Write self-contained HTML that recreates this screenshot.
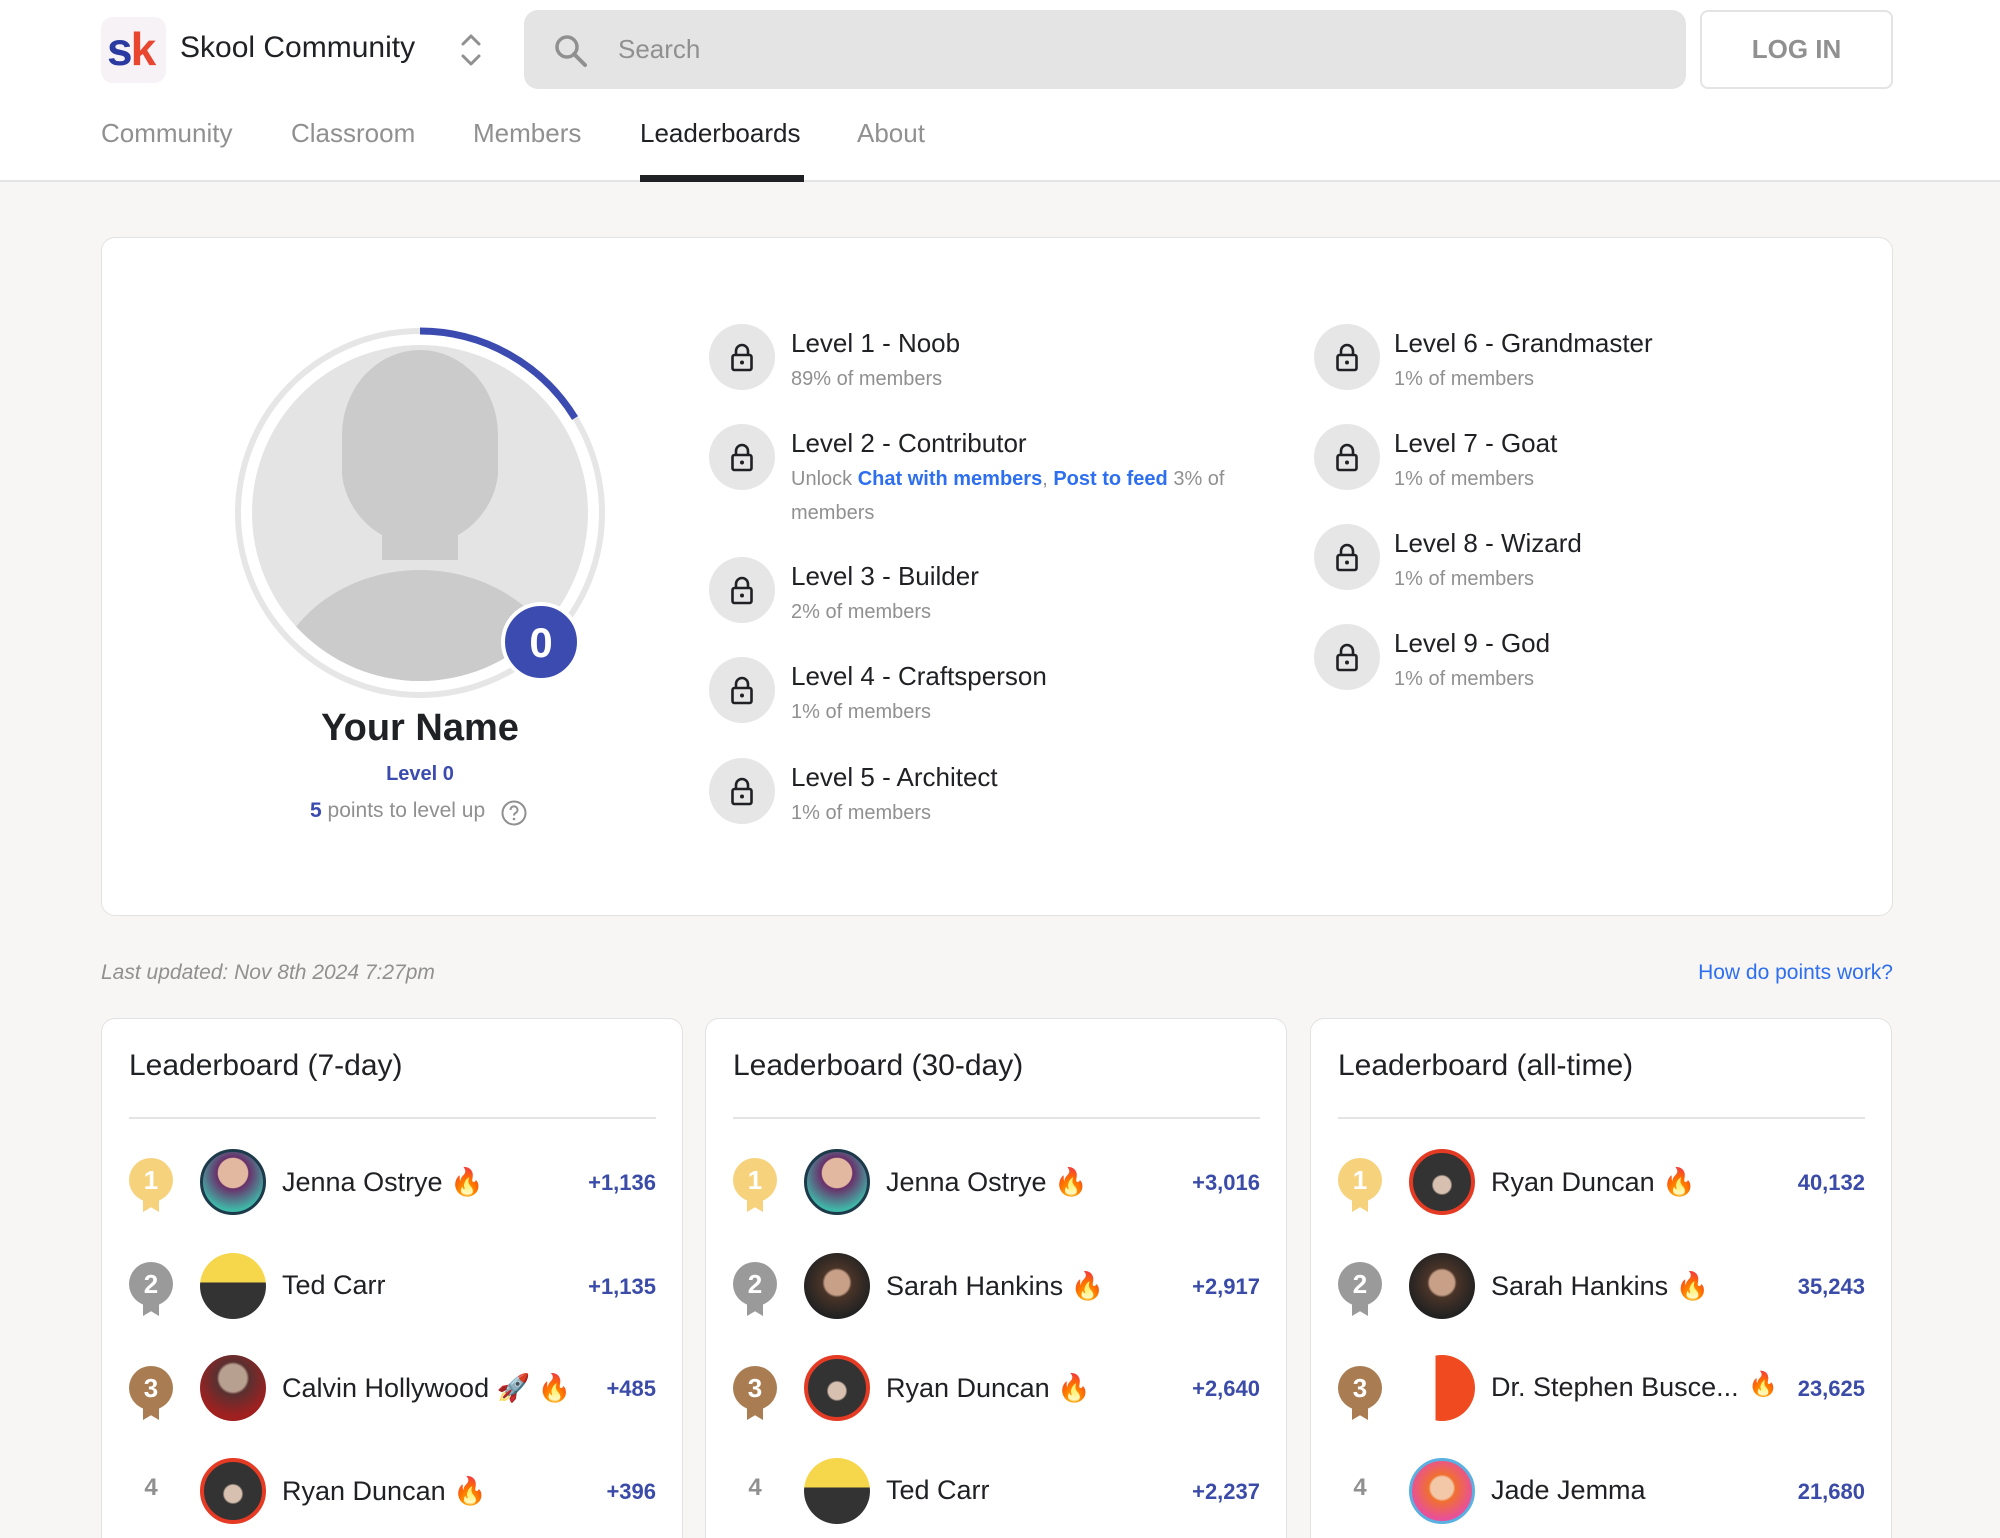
<!DOCTYPE html>
<html><head><meta charset="utf-8"><style>
*{box-sizing:border-box;margin:0;padding:0}
html,body{width:2000px;height:1538px;overflow:hidden}
body{background:#f7f6f4;font-family:"Liberation Sans",Roboto,sans-serif;color:#202124}
#w{position:relative;width:2000px;height:1538px;overflow:hidden}
.a{position:absolute;white-space:nowrap}
.hdr{position:absolute;left:0;top:0;width:2000px;height:182px;background:#fff;border-bottom:2px solid #e4e4e4}
.nav{top:118px;font-size:26px;color:#909090}
.card{position:absolute;background:#fff;border:1.5px solid #e2e2e2;border-radius:14px}
.lock{position:absolute;width:66px;height:66px;border-radius:50%;background:#e6e6e6}
.lock svg{position:absolute;left:21px;top:18px}
.lt{font-size:26px;color:#202124}
.ls{font-size:20px;color:#909090}
.med{position:absolute;width:44px;height:44px;border-radius:50%;color:#fff;font-size:26px;font-weight:bold;text-align:center;line-height:44px}
.med:after{content:"";position:absolute;left:14px;top:38px;width:16px;height:16px;background:inherit;clip-path:polygon(0 0,100% 0,100% 100%,50% 70%,0 100%)}
.av{position:absolute;width:66px;height:66px;border-radius:50%}
.nm{font-size:27px;color:#202124}
.pt{font-size:22px;color:#3a4ba8;font-weight:bold;text-align:right}
.lbt{font-size:30px;color:#202124}
</style></head><body><div id="w">
<div class="hdr"></div>
<div class="a" style="left:101px;top:17px;width:65px;height:66px;border-radius:12px;background:#f6f2f6"></div>
<div class="a" style="left:107px;top:22px;font-size:46px;font-weight:bold;letter-spacing:-2px"><span style="color:#2b3aa0">s</span><span style="color:#e8462f">k</span></div>
<div class="a" style="left:180px;top:31px;font-size:30px;color:#202124">Skool Community</div>
<svg class="a" style="left:458px;top:32px" width="26" height="36" viewBox="0 0 26 36"><path d="M5 12 L13 4 L21 12 M5 24 L13 32 L21 24" fill="none" stroke="#909090" stroke-width="3" stroke-linecap="round" stroke-linejoin="round"/></svg>
<div class="a" style="left:524px;top:10px;width:1162px;height:79px;border-radius:14px;background:#e4e4e4"></div>
<svg class="a" style="left:553px;top:33px" width="36" height="36" viewBox="0 0 36 36"><circle cx="14" cy="14" r="10" fill="none" stroke="#909090" stroke-width="3.5"/><path d="M21 21 L32 32" stroke="#909090" stroke-width="4" stroke-linecap="round"/></svg>
<div class="a" style="left:618px;top:34px;font-size:26px;color:#909090">Search</div>
<div class="a" style="left:1700px;top:10px;width:193px;height:79px;border:2px solid #e4e4e4;border-radius:8px;font-size:26px;font-weight:bold;color:#909090;text-align:center;line-height:75px">LOG IN</div>
<div class="a nav" style="left:101px">Community</div>
<div class="a nav" style="left:291px">Classroom</div>
<div class="a nav" style="left:473px">Members</div>
<div class="a nav" style="left:640px;color:#202124">Leaderboards</div>
<div class="a nav" style="left:857px">About</div>
<div class="a" style="left:640px;top:175px;width:164px;height:7px;background:#202124"></div>

<div class="card" style="left:101px;top:237px;width:1792px;height:679px"></div>
<svg class="a" style="left:232px;top:325px" width="376" height="376" viewBox="0 0 376 376">
<circle cx="188" cy="188" r="182" fill="none" stroke="#e6e6e6" stroke-width="6"/>
<path d="M188 6 A182 182 0 0 1 343 93" fill="none" stroke="#3b4bb0" stroke-width="7"/>
<circle cx="188" cy="188" r="168" fill="#e4e4e4"/>
<clipPath id="c"><circle cx="188" cy="188" r="168"/></clipPath>
<g clip-path="url(#c)" fill="#cbcbcb"><path d="M110 110 a78 85 0 0 1 156 0 v40 a78 80 0 0 1 -40 60 v25 h-76 v-25 a78 80 0 0 1 -40 -60 z"/><ellipse cx="188" cy="375" rx="150" ry="130"/></g>
<circle cx="309" cy="317" r="38" fill="#3b4bb0" stroke="#fff" stroke-width="4"/>
<text x="309" y="332" font-size="42" font-weight="bold" fill="#fff" text-anchor="middle" font-family="Liberation Sans">0</text>
</svg>
<div class="a" style="left:220px;width:400px;text-align:center;top:707px;font-size:38px;font-weight:bold">Your Name</div>
<div class="a" style="left:220px;width:400px;text-align:center;top:763px;font-size:20px;font-weight:bold;color:#3b4bb0">Level 0</div>
<div class="a" style="left:310px;top:799px;font-size:21px;color:#909090"><b style="color:#3b4bb0">5</b> points to level up</div>
<svg class="a" style="left:500px;top:799px" width="28" height="28" viewBox="0 0 28 28"><circle cx="14" cy="14" r="11.5" fill="none" stroke="#909090" stroke-width="2"/><path d="M10.5 11 a3.5 3.5 0 1 1 5 3 c-1.2 .6 -1.5 1.2 -1.5 2.5" fill="none" stroke="#909090" stroke-width="2"/><circle cx="14" cy="20" r="1.3" fill="#909090"/></svg>

<div class="lock" style="left:709px;top:324px"><svg width="24" height="30" viewBox="0 0 24 30"><path d="M6 13 V9 a6 6 0 0 1 12 0 V13" fill="none" stroke="#202124" stroke-width="2.6"/><rect x="2.5" y="13" width="19" height="15" rx="2" fill="none" stroke="#202124" stroke-width="2.6"/><circle cx="12" cy="20.5" r="2" fill="#202124"/></svg></div>
<div class="a lt" style="left:791px;top:328px">Level 1 - Noob</div>
<div class="a ls" style="left:791px;top:368px">89% of members</div>
<div class="lock" style="left:709px;top:424px"><svg width="24" height="30" viewBox="0 0 24 30"><path d="M6 13 V9 a6 6 0 0 1 12 0 V13" fill="none" stroke="#202124" stroke-width="2.6"/><rect x="2.5" y="13" width="19" height="15" rx="2" fill="none" stroke="#202124" stroke-width="2.6"/><circle cx="12" cy="20.5" r="2" fill="#202124"/></svg></div>
<div class="a lt" style="left:791px;top:428px">Level 2 - Contributor</div>
<div class="a ls" style="left:791px;top:468px">Unlock <b style="color:#2e6ff0">Chat with members</b>, <b style="color:#2e6ff0">Post to feed</b> 3% of</div>
<div class="a ls" style="left:791px;top:502px">members</div>
<div class="lock" style="left:709px;top:557px"><svg width="24" height="30" viewBox="0 0 24 30"><path d="M6 13 V9 a6 6 0 0 1 12 0 V13" fill="none" stroke="#202124" stroke-width="2.6"/><rect x="2.5" y="13" width="19" height="15" rx="2" fill="none" stroke="#202124" stroke-width="2.6"/><circle cx="12" cy="20.5" r="2" fill="#202124"/></svg></div>
<div class="a lt" style="left:791px;top:561px">Level 3 - Builder</div>
<div class="a ls" style="left:791px;top:601px">2% of members</div>
<div class="lock" style="left:709px;top:657px"><svg width="24" height="30" viewBox="0 0 24 30"><path d="M6 13 V9 a6 6 0 0 1 12 0 V13" fill="none" stroke="#202124" stroke-width="2.6"/><rect x="2.5" y="13" width="19" height="15" rx="2" fill="none" stroke="#202124" stroke-width="2.6"/><circle cx="12" cy="20.5" r="2" fill="#202124"/></svg></div>
<div class="a lt" style="left:791px;top:661px">Level 4 - Craftsperson</div>
<div class="a ls" style="left:791px;top:701px">1% of members</div>
<div class="lock" style="left:709px;top:758px"><svg width="24" height="30" viewBox="0 0 24 30"><path d="M6 13 V9 a6 6 0 0 1 12 0 V13" fill="none" stroke="#202124" stroke-width="2.6"/><rect x="2.5" y="13" width="19" height="15" rx="2" fill="none" stroke="#202124" stroke-width="2.6"/><circle cx="12" cy="20.5" r="2" fill="#202124"/></svg></div>
<div class="a lt" style="left:791px;top:762px">Level 5 - Architect</div>
<div class="a ls" style="left:791px;top:802px">1% of members</div>

<div class="lock" style="left:1314px;top:324px"><svg width="24" height="30" viewBox="0 0 24 30"><path d="M6 13 V9 a6 6 0 0 1 12 0 V13" fill="none" stroke="#202124" stroke-width="2.6"/><rect x="2.5" y="13" width="19" height="15" rx="2" fill="none" stroke="#202124" stroke-width="2.6"/><circle cx="12" cy="20.5" r="2" fill="#202124"/></svg></div>
<div class="a lt" style="left:1394px;top:328px">Level 6 - Grandmaster</div>
<div class="a ls" style="left:1394px;top:368px">1% of members</div>
<div class="lock" style="left:1314px;top:424px"><svg width="24" height="30" viewBox="0 0 24 30"><path d="M6 13 V9 a6 6 0 0 1 12 0 V13" fill="none" stroke="#202124" stroke-width="2.6"/><rect x="2.5" y="13" width="19" height="15" rx="2" fill="none" stroke="#202124" stroke-width="2.6"/><circle cx="12" cy="20.5" r="2" fill="#202124"/></svg></div>
<div class="a lt" style="left:1394px;top:428px">Level 7 - Goat</div>
<div class="a ls" style="left:1394px;top:468px">1% of members</div>
<div class="lock" style="left:1314px;top:524px"><svg width="24" height="30" viewBox="0 0 24 30"><path d="M6 13 V9 a6 6 0 0 1 12 0 V13" fill="none" stroke="#202124" stroke-width="2.6"/><rect x="2.5" y="13" width="19" height="15" rx="2" fill="none" stroke="#202124" stroke-width="2.6"/><circle cx="12" cy="20.5" r="2" fill="#202124"/></svg></div>
<div class="a lt" style="left:1394px;top:528px">Level 8 - Wizard</div>
<div class="a ls" style="left:1394px;top:568px">1% of members</div>
<div class="lock" style="left:1314px;top:624px"><svg width="24" height="30" viewBox="0 0 24 30"><path d="M6 13 V9 a6 6 0 0 1 12 0 V13" fill="none" stroke="#202124" stroke-width="2.6"/><rect x="2.5" y="13" width="19" height="15" rx="2" fill="none" stroke="#202124" stroke-width="2.6"/><circle cx="12" cy="20.5" r="2" fill="#202124"/></svg></div>
<div class="a lt" style="left:1394px;top:628px">Level 9 - God</div>
<div class="a ls" style="left:1394px;top:668px">1% of members</div>

<div class="a" style="left:101px;top:961px;font-size:21px;color:#909090;font-style:italic">Last updated: Nov 8th 2024 7:27pm</div>
<div class="a" style="right:107px;top:961px;font-size:21px;color:#2e6ff0">How do points work?</div>

<div class="card" style="left:101px;top:1018px;width:582px;height:560px"></div>
<div class="card" style="left:705px;top:1018px;width:582px;height:560px"></div>
<div class="card" style="left:1310px;top:1018px;width:582px;height:560px"></div>
<div class="a lbt" style="left:129px;top:1049px">Leaderboard (7-day)</div>
<div class="a lbt" style="left:733px;top:1049px">Leaderboard (30-day)</div>
<div class="a lbt" style="left:1338px;top:1049px">Leaderboard (all-time)</div>
<div class="a" style="left:129px;top:1117px;width:527px;height:2px;background:#e4e4e4"></div>
<div class="a" style="left:733px;top:1117px;width:527px;height:2px;background:#e4e4e4"></div>
<div class="a" style="left:1338px;top:1117px;width:527px;height:2px;background:#e4e4e4"></div>

<div class="med" style="left:129px;top:1158px;background:#f7d27d">1</div>
<div class="av" style="left:200px;top:1149px;background:radial-gradient(circle at 50% 35%,#e2b9a0 0 30%,#6a2f6a 32%,#3fb8a8 75%);border:3px solid #1d3a4a"></div>
<div class="a nm" style="left:282px;top:1166px">Jenna Ostrye 🔥</div>
<div class="a pt" style="left:500px;width:156px;top:1170px">+1,136</div>
<div class="med" style="left:129px;top:1262px;background:#9a9a9a">2</div>
<div class="av" style="left:200px;top:1253px;background:linear-gradient(#f6d64a 0 45%,#333 45%)"></div>
<div class="a nm" style="left:282px;top:1270px">Ted Carr</div>
<div class="a pt" style="left:500px;width:156px;top:1274px">+1,135</div>
<div class="med" style="left:129px;top:1366px;background:#a97c52">3</div>
<div class="av" style="left:200px;top:1355px;background:radial-gradient(circle at 50% 35%,#b8a090 0 25%,#5a3030 30%,#a02020 70%)"></div>
<div class="a nm" style="left:282px;top:1372px">Calvin Hollywood 🚀 🔥</div>
<div class="a pt" style="left:500px;width:156px;top:1376px">+485</div>
<div class="a" style="left:129px;top:1474px;width:44px;text-align:center;font-size:24px;font-weight:bold;color:#909090">4</div>
<div class="av" style="left:200px;top:1458px;background:radial-gradient(circle at 50% 55%,#d8c0b0 0 20%,#333 24%);border:4px solid #e53a24"></div>
<div class="a nm" style="left:282px;top:1475px">Ryan Duncan 🔥</div>
<div class="a pt" style="left:500px;width:156px;top:1479px">+396</div>

<div class="med" style="left:733px;top:1158px;background:#f7d27d">1</div>
<div class="av" style="left:804px;top:1149px;background:radial-gradient(circle at 50% 35%,#e2b9a0 0 30%,#6a2f6a 32%,#3fb8a8 75%);border:3px solid #1d3a4a"></div>
<div class="a nm" style="left:886px;top:1166px">Jenna Ostrye 🔥</div>
<div class="a pt" style="left:1104px;width:156px;top:1170px">+3,016</div>
<div class="med" style="left:733px;top:1262px;background:#9a9a9a">2</div>
<div class="av" style="left:804px;top:1253px;background:radial-gradient(circle at 50% 45%,#c8a088 0 25%,#4a3428 30%,#222 70%)"></div>
<div class="a nm" style="left:886px;top:1270px">Sarah Hankins 🔥</div>
<div class="a pt" style="left:1104px;width:156px;top:1274px">+2,917</div>
<div class="med" style="left:733px;top:1366px;background:#a97c52">3</div>
<div class="av" style="left:804px;top:1355px;background:radial-gradient(circle at 50% 55%,#d8c0b0 0 20%,#333 24%);border:4px solid #e53a24"></div>
<div class="a nm" style="left:886px;top:1372px">Ryan Duncan 🔥</div>
<div class="a pt" style="left:1104px;width:156px;top:1376px">+2,640</div>
<div class="a" style="left:733px;top:1474px;width:44px;text-align:center;font-size:24px;font-weight:bold;color:#909090">4</div>
<div class="av" style="left:804px;top:1458px;background:linear-gradient(#f6d64a 0 45%,#333 45%)"></div>
<div class="a nm" style="left:886px;top:1475px">Ted Carr</div>
<div class="a pt" style="left:1104px;width:156px;top:1479px">+2,237</div>

<div class="med" style="left:1338px;top:1158px;background:#f7d27d">1</div>
<div class="av" style="left:1409px;top:1149px;background:radial-gradient(circle at 50% 55%,#d8c0b0 0 20%,#333 24%);border:4px solid #e53a24"></div>
<div class="a nm" style="left:1491px;top:1166px">Ryan Duncan 🔥</div>
<div class="a pt" style="left:1709px;width:156px;top:1170px">40,132</div>
<div class="med" style="left:1338px;top:1262px;background:#9a9a9a">2</div>
<div class="av" style="left:1409px;top:1253px;background:radial-gradient(circle at 50% 45%,#c8a088 0 25%,#4a3428 30%,#222 70%)"></div>
<div class="a nm" style="left:1491px;top:1270px">Sarah Hankins 🔥</div>
<div class="a pt" style="left:1709px;width:156px;top:1274px">35,243</div>
<div class="med" style="left:1338px;top:1366px;background:#a97c52">3</div>
<div class="av" style="left:1409px;top:1355px;background:linear-gradient(90deg,#fff 0 40%,#f04a20 40%)"></div>
<div class="a nm" style="left:1491px;top:1372px">Dr. Stephen Busce...</div>
<div class="a" style="left:1748px;top:1370px;font-size:24px">🔥</div>
<div class="a pt" style="left:1709px;width:156px;top:1376px">23,625</div>
<div class="a" style="left:1338px;top:1474px;width:44px;text-align:center;font-size:24px;font-weight:bold;color:#909090">4</div>
<div class="av" style="left:1409px;top:1458px;background:radial-gradient(circle at 50% 45%,#f2c8a8 0 25%,#f07030 30%,#e8509a 70%);border:3px solid #5ab0e0"></div>
<div class="a nm" style="left:1491px;top:1475px">Jade Jemma</div>
<div class="a pt" style="left:1709px;width:156px;top:1479px">21,680</div>
</div></body></html>
